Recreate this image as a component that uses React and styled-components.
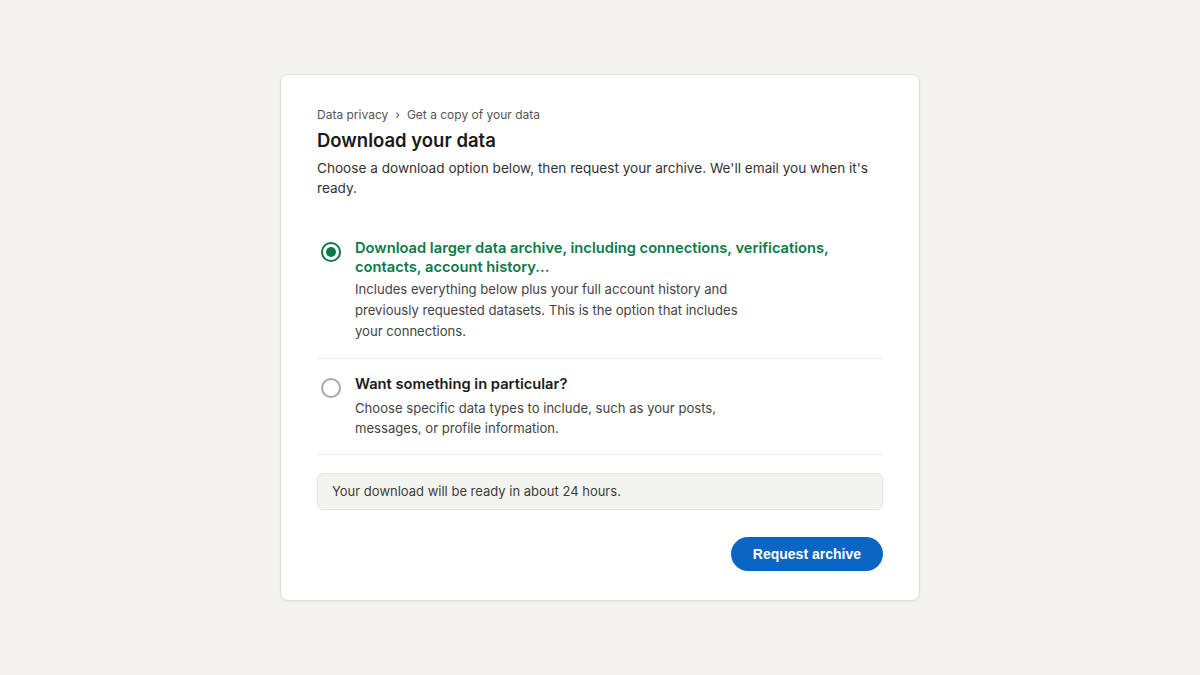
import React, { useState } from 'react';
import styled, { createGlobalStyle } from 'styled-components';

const GlobalStyle = createGlobalStyle`
  * { box-sizing: border-box; }
  html, body { margin: 0; padding: 0; }
  body {
    background: #f3f2ef;
    font-family: Inter, 'Noto Sans', sans-serif;
    color: #1d1d1d;
  }
`;

const options = [
  {
    id: 'full',
    title: 'Download larger data archive, including connections, verifications, contacts, account history...',
    description:
      'Includes everything below plus your full account history and previously requested datasets. This is the option that includes your connections.',
  },
  {
    id: 'custom',
    title: 'Want something in particular?',
    description: 'Choose specific data types to include, such as your posts, messages, or profile information.',
  },
];

const Page = styled.div`
  min-height: 675px;
  display: flex;
  justify-content: center;
  padding-top: 74px;
`;

const Card = styled.section`
  width: 640px;
  height: 527px;
  background: #fff;
  border: 1px solid #dfdedb;
  border-radius: 8px;
  box-shadow: 0 1px 2px rgba(0, 0, 0, 0.05);
  padding: 32px 36px 28px;
  display: flex;
  flex-direction: column;
`;

const Breadcrumb = styled.nav`
  font-size: 12px;
  line-height: 16px;
  color: #555;
  display: flex;
  gap: 7px;
`;

const Title = styled.h1`
  margin: 5px 0 0;
  font-size: 18.5px;
  line-height: 24px;
  font-weight: 600;
  color: #1a1a1a;
`;

const Lead = styled.p`
  margin: 6px 0 0;
  font-size: 13.6px;
  line-height: 20px;
  color: #333;
`;

const OptionList = styled.div`
  margin-top: 25px;
  display: flex;
  flex-direction: column;
`;

const Option = styled.label`
  display: flex;
  gap: 14px;
  padding: 16px 0;
  border-bottom: 1px solid #ebebea;
  cursor: pointer;
`;

const Radio = styled.span`
  flex: none;
  width: 20px;
  height: 20px;
  margin: 3px 0 0 4px;
  border-radius: 50%;
  border: 2px solid ${p => (p.$checked ? '#0b7a4b' : '#a8a8a8')};
  display: flex;
  align-items: center;
  justify-content: center;

  &::after {
    content: '';
    width: 10px;
    height: 10px;
    border-radius: 50%;
    background: ${p => (p.$checked ? '#0b7a4b' : 'transparent')};
  }
`;

const OptionBody = styled.div`
  display: flex;
  flex-direction: column;
`;

const OptionTitle = styled.div`
  font-size: 14.7px;
  line-height: 19px;
  font-weight: 600;
  color: ${p => (p.$checked ? '#0b7a4b' : '#1a1a1a')};
  max-width: 490px;
`;

const OptionText = styled.p`
  margin: ${p => (p.$checked ? '2px' : '4px')} 0 0;
  font-size: 13.1px;
  line-height: ${p => (p.$checked ? '21px' : '20px')};
  color: #444;
  max-width: 400px;
`;

const Notice = styled.div`
  margin-top: 18px;
  background: #f3f3ef;
  border: 1px solid #e3e3df;
  border-radius: 6px;
  padding: 9px 14px;
  font-size: 13px;
  line-height: 17px;
  color: #3d3d3d;
`;

const Actions = styled.div`
  margin-top: 27px;
  display: flex;
  justify-content: flex-end;
`;

const Button = styled.button`
  height: 34px;
  padding: 0 22px;
  border: none;
  border-radius: 17px;
  background: #0a66c2;
  color: #fff;
  font-family: 'Liberation Sans', Arial, sans-serif;
  font-size: 14px;
  font-weight: 700;
  cursor: pointer;
`;

export default function App() {
  const [selected, setSelected] = useState('full');

  return (
    <>
      <GlobalStyle />
      <Page>
        <Card>
          <Breadcrumb>
            <span>Data privacy</span>
            <span>›</span>
            <span>Get a copy of your data</span>
          </Breadcrumb>
          <Title>Download your data</Title>
          <Lead>Choose a download option below, then request your archive. We'll email you when it's ready.</Lead>
          <OptionList>
            {options.map(option => {
              const checked = selected === option.id;
              return (
                <Option key={option.id} onClick={() => setSelected(option.id)}>
                  <Radio $checked={checked} />
                  <OptionBody>
                    <OptionTitle $checked={checked}>{option.title}</OptionTitle>
                    <OptionText $checked={checked}>{option.description}</OptionText>
                  </OptionBody>
                </Option>
              );
            })}
          </OptionList>
          <Notice>Your download will be ready in about 24 hours.</Notice>
          <Actions>
            <Button>Request archive</Button>
          </Actions>
        </Card>
      </Page>
    </>
  );
}
